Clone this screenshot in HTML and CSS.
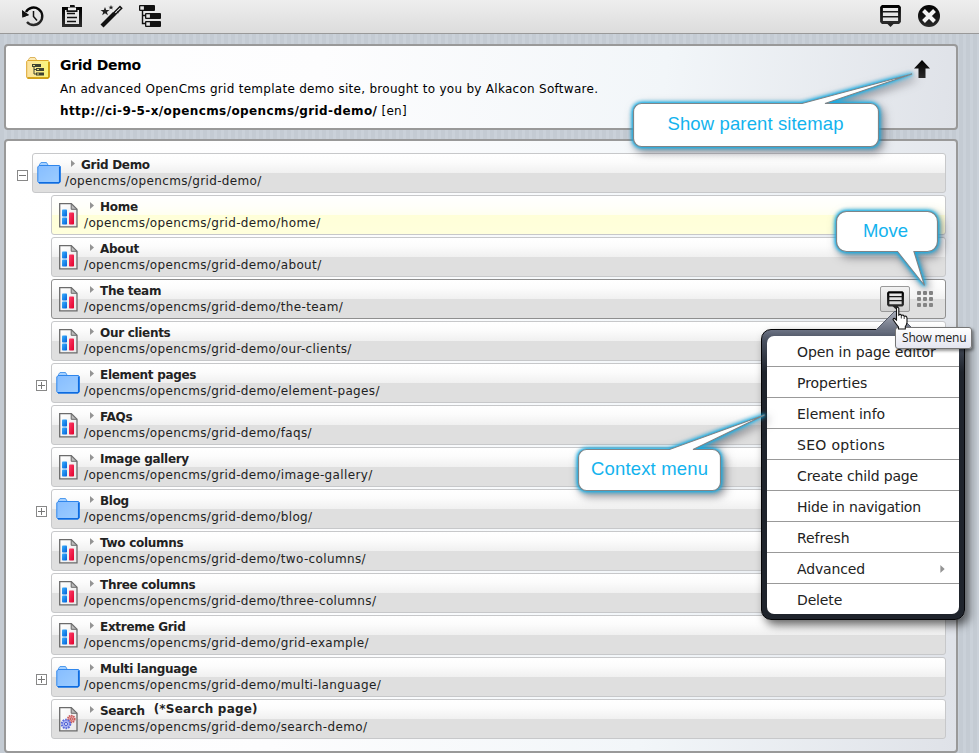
FILE: index.html
```html
<!DOCTYPE html>
<html lang="en">
<head>
<meta charset="utf-8">
<title>Grid Demo sitemap</title>
<link rel="stylesheet" href="styles.css">
</head>
<body>
<svg class="defs" width="0" height="0">
  <defs>
    <linearGradient id="ink" x1="0" y1="0" x2="0" y2="1"><stop offset="0" stop-color="#000"/><stop offset="1" stop-color="#2b2b2b"/></linearGradient>
    <linearGradient id="blueFolder" x1="0" y1="0" x2="1" y2="1"><stop offset="0" stop-color="#86bdff"/><stop offset="1" stop-color="#9dcdff"/></linearGradient>
    <linearGradient id="goldFolder" x1="0" y1="0" x2="1" y2="0"><stop offset="0" stop-color="#fbe1a0"/><stop offset="1" stop-color="#fbf678"/></linearGradient>
    <linearGradient id="sheet" x1="0" y1="0" x2="1" y2="1"><stop offset="0" stop-color="#fff"/><stop offset="1" stop-color="#e9e9e9"/></linearGradient>
    <linearGradient id="blueTile" x1="0" y1="0" x2="1" y2="1"><stop offset="0" stop-color="#3bb0ff"/><stop offset="1" stop-color="#0060d8"/></linearGradient>
    <linearGradient id="redTile" x1="0" y1="0" x2="1" y2="1"><stop offset="0" stop-color="#ff3c68"/><stop offset="1" stop-color="#e0002c"/></linearGradient>
    <linearGradient id="beak" x1="0" y1="0" x2="0" y2="1"><stop offset="0" stop-color="#a9adb9"/><stop offset="1" stop-color="#666d7d"/></linearGradient>
  </defs>
  <symbol id="folder" viewBox="0 0 24 24">
    <path d="M2.500 5V3.500L4 1.500h5.500L11 4v2H2.500z" fill="#a5d0ff" stroke="#4f9bee"/>
    <path d="M2 4.500h20.500l.8 1v15.300l-1.300 1.200H2L.8 20.500V6z" fill="url(#blueFolder)" stroke="#2f86ec"/>
    <path d="M22.700 5.500v15.500l-.9.700H2" fill="none" stroke="#0d6be0" stroke-width="1.500"/>
  </symbol>
  <symbol id="page" viewBox="0 0 19 25">
    <path d="M.7.7h11.600l5.700 5.500v17.600H.7z" fill="url(#sheet)" stroke="#6b6b6b" stroke-width="1.300"/>
    <path d="M12.200.8v5.500h5.700z" fill="#bbb" stroke="#6b6b6b"/>
    <rect x="3" y="6.500" width="5" height="7" rx=".8" fill="url(#blueTile)"/>
    <rect x="3" y="14.500" width="5" height="7" rx=".8" fill="url(#blueTile)"/>
    <rect x="10" y="9.500" width="5" height="12" rx=".8" fill="url(#redTile)"/>
  </symbol>
  <symbol id="gears" viewBox="0 0 19 25">
    <path d="M.7.7h11.600l5.700 5.500v17.600H.7z" fill="url(#sheet)" stroke="#6b6b6b" stroke-width="1.300"/>
    <path d="M12.200.8v5.500h5.700z" fill="#bbb" stroke="#6b6b6b"/>
    <circle cx="12.300" cy="12" r="3.400" fill="#e9a0a0" stroke="#c85a5a" stroke-width="1.800" stroke-dasharray="1.400 .8"/>
    <circle cx="12.300" cy="12" r="1.100" fill="#fff" stroke="#b84848"/>
    <circle cx="7" cy="17" r="4.300" fill="#a9b2f2" stroke="#5b6bdc" stroke-width="2" stroke-dasharray="1.700 1"/>
    <circle cx="7" cy="17" r="1.500" fill="#fff" stroke="#4456cc"/>
  </symbol>
  <symbol id="caret" viewBox="0 0 4 7"><path d="M0 0l4 3.500L0 7z" fill="#949494"/></symbol>
  <symbol id="bubble" viewBox="0 0 21 22">
    <path d="M2.500 1.500h16l1 1v14l-1 1h-16l-1-1v-14z" fill="none" stroke="url(#ink)" stroke-width="2.800"/>
    <path d="M2 6.700h17M2 11.700h17" stroke="#1a1a1a" stroke-width="1.500"/>
    <path d="M6.500 18h8l-4 4z" fill="#222"/>
  </symbol>
  <symbol id="tree" viewBox="0 0 23 23">
    <path d="M3.500 6v12.500H9M3.500 10.500H9" fill="none" stroke="#111" stroke-width="1.400"/>
    <rect x="0" y="0" width="16" height="6" rx="1" fill="#111"/><rect x="1.300" y="1.300" width="3.600" height="3.400" fill="#e8e8e8"/>
    <rect x="6" y="8" width="16" height="6" rx="1" fill="#111"/><rect x="7.300" y="9.300" width="3.600" height="3.400" fill="#e8e8e8"/>
    <rect x="6" y="16" width="16" height="6" rx="1" fill="#111"/><rect x="7.300" y="17.300" width="3.600" height="3.400" fill="#e8e8e8"/>
  </symbol>
</svg>

<header class="toolbar">
  <div class="tools tools-left">
    <svg width="22" height="22" viewBox="0 0 22 22"><path d="M4 7A8.700 8.700 0 1 1 5 17" fill="none" stroke="url(#ink)" stroke-width="2.400"/><path d="M0 5.500l.5 7 6.500-2.500z" fill="#111"/><path d="M0 5l7 5-6.500 2.500z" fill="#111"/><path d="M11.500 6v5.500l3.500 4" fill="none" stroke="#111" stroke-width="1.500"/></svg>
    <svg width="21" height="22" viewBox="0 0 21 22"><path d="M1.500 3.500h17v17h-17z" fill="none" stroke="url(#ink)" stroke-width="3"/><path d="M4.500 7V2.500L6 3h1.500L9 0h3l1.500 3H14l1.500-.5V7z" fill="#111"/><path d="M6 2.500h8v2.800H6z" fill="#eee"/><path d="M8 0h4.500v2H8z" fill="#111"/><path d="M5 8.500h8M5 12.500h10M5 16.500h9" stroke="#111" stroke-width="1.400"/></svg>
    <svg width="23" height="23" viewBox="0 0 23 23"><path d="M2 21L14.500 8.500" stroke="#111" stroke-width="4.200"/><path d="M14 7.500L20 1.500l1.700 1.700L15.700 9.200z" fill="#eee" stroke="#111" stroke-width="1.500"/><path d="M17 6.500l1.500 1.300" stroke="#111"/><path d="M5 2l1.200 3H9.500L6.900 7l1 3.200L5 8.300 2.200 10.200l1-3.200L.5 5h3.300zM11 0l.7 1.700h1.800l-1.400 1.100.5 1.700-1.600-1-1.600 1L9.900 2.800 8.500 1.700h1.800z" fill="#222"/></svg>
    <svg width="23" height="23"><use href="#tree"/></svg>
  </div>
  <div class="tools tools-right">
    <svg width="21" height="22"><use href="#bubble"/></svg>
    <svg width="22" height="22" viewBox="0 0 22 22"><circle cx="11" cy="11" r="11" fill="url(#ink)"/><path d="M5.500 5.500l11 11M16.500 5.500l-11 11" stroke="#f4f4f4" stroke-width="4"/></svg>
  </div>
</header>

<section class="panel info">
  <svg class="info-icon" width="24" height="22" viewBox="0 0 24 22"><path d="M2.500 5V2.500l1.500-2h5l1.500 2.500v2z" fill="#fdeab5" stroke="#dcb560"/><path d="M1.500 3.500h20.800l.7 1v15.500l-1 1.200H1.500L.7 20V4.500z" fill="url(#goldFolder)" stroke="#dda62b"/><path d="M23 5v15l-1 1H1.500" fill="none" stroke="#c99500" stroke-width="1.500"/><g fill="#3f4232"><rect x="6" y="7" width="9" height="3"/><rect x="10" y="11" width="8" height="3"/><rect x="10" y="15.500" width="8" height="3"/></g><path d="M8 9v8h3M8 12.500h3" fill="none" stroke="#3f4232"/><path d="M7 8h2v1H7zM11 12h2v1h-2zM11 16.500h2v1h-2z" fill="#e5db80"/></svg>
  <div class="info-text">
    <h1>Grid Demo</h1>
    <p class="desc">An advanced OpenCms grid template demo site, brought to you by Alkacon Software.</p>
    <p class="link"><b>http://ci-9-5-x/opencms/opencms/grid-demo/</b> <span>[en]</span></p>
  </div>
  <svg class="up" width="16" height="18" viewBox="0 0 16 18"><path d="M8 0l8 8.500h-4.500V18h-7V8.500H0z" fill="url(#ink)"/></svg>
</section>

<section class="panel tree">
  <div class="node root"><i class="toggle"></i><div class="row"><svg class="folder"><use href="#folder"/></svg><div class="label"><div class="title"><svg class="caret"><use href="#caret"/></svg><b>Grid Demo</b></div><div class="url">/opencms/opencms/grid-demo/</div></div></div></div>
  <div class="node"><div class="row home"><svg class="page"><use href="#page"/></svg><div class="label"><div class="title"><svg class="caret"><use href="#caret"/></svg><b>Home</b></div><div class="url">/opencms/opencms/grid-demo/home/</div></div></div></div>
  <div class="node"><div class="row"><svg class="page"><use href="#page"/></svg><div class="label"><div class="title"><svg class="caret"><use href="#caret"/></svg><b>About</b></div><div class="url">/opencms/opencms/grid-demo/about/</div></div></div></div>
  <div class="node"><div class="row active"><svg class="page"><use href="#page"/></svg><div class="label"><div class="title"><svg class="caret"><use href="#caret"/></svg><b>The team</b></div><div class="url">/opencms/opencms/grid-demo/the-team/</div></div>
    <div class="actions"><button class="menu-btn"><svg width="17" height="18"><use href="#bubble"/></svg></button><span class="grip"><i></i><i></i><i></i><i></i><i></i><i></i><i></i><i></i><i></i></span></div></div></div>
  <div class="node"><div class="row"><svg class="page"><use href="#page"/></svg><div class="label"><div class="title"><svg class="caret"><use href="#caret"/></svg><b>Our clients</b></div><div class="url">/opencms/opencms/grid-demo/our-clients/</div></div></div></div>
  <div class="node"><i class="toggle plus"></i><div class="row"><svg class="folder"><use href="#folder"/></svg><div class="label"><div class="title"><svg class="caret"><use href="#caret"/></svg><b>Element pages</b></div><div class="url">/opencms/opencms/grid-demo/element-pages/</div></div></div></div>
  <div class="node"><div class="row"><svg class="page"><use href="#page"/></svg><div class="label"><div class="title"><svg class="caret"><use href="#caret"/></svg><b>FAQs</b></div><div class="url">/opencms/opencms/grid-demo/faqs/</div></div></div></div>
  <div class="node"><div class="row"><svg class="page"><use href="#page"/></svg><div class="label"><div class="title"><svg class="caret"><use href="#caret"/></svg><b>Image gallery</b></div><div class="url">/opencms/opencms/grid-demo/image-gallery/</div></div></div></div>
  <div class="node"><i class="toggle plus"></i><div class="row"><svg class="folder"><use href="#folder"/></svg><div class="label"><div class="title"><svg class="caret"><use href="#caret"/></svg><b>Blog</b></div><div class="url">/opencms/opencms/grid-demo/blog/</div></div></div></div>
  <div class="node"><div class="row"><svg class="page"><use href="#page"/></svg><div class="label"><div class="title"><svg class="caret"><use href="#caret"/></svg><b>Two columns</b></div><div class="url">/opencms/opencms/grid-demo/two-columns/</div></div></div></div>
  <div class="node"><div class="row"><svg class="page"><use href="#page"/></svg><div class="label"><div class="title"><svg class="caret"><use href="#caret"/></svg><b>Three columns</b></div><div class="url">/opencms/opencms/grid-demo/three-columns/</div></div></div></div>
  <div class="node"><div class="row"><svg class="page"><use href="#page"/></svg><div class="label"><div class="title"><svg class="caret"><use href="#caret"/></svg><b>Extreme Grid</b></div><div class="url">/opencms/opencms/grid-demo/grid-example/</div></div></div></div>
  <div class="node"><i class="toggle plus"></i><div class="row"><svg class="folder"><use href="#folder"/></svg><div class="label"><div class="title"><svg class="caret"><use href="#caret"/></svg><b>Multi language</b></div><div class="url">/opencms/opencms/grid-demo/multi-language/</div></div></div></div>
  <div class="node"><div class="row"><svg class="page"><use href="#gears"/></svg><div class="label"><div class="title"><svg class="caret"><use href="#caret"/></svg><b>Search</b><b class="suffix">(*Search page)</b></div><div class="url">/opencms/opencms/grid-demo/search-demo/</div></div></div></div>
</section>

<nav class="menu">
  <svg class="menu-beak" width="38" height="20" viewBox="0 0 38 20"><path d="M0 19L19 0l19 19v1H0z" fill="url(#beak)"/><path d="M0 19L19 0l19 19" fill="none" stroke="#555b69"/></svg>
  <ul>
    <li>Open in page editor</li>
    <li>Properties</li>
    <li>Element info</li>
    <li>SEO options</li>
    <li>Create child page</li>
    <li>Hide in navigation</li>
    <li>Refresh</li>
    <li>Advanced<svg class="sub" width="5" height="8" viewBox="0 0 4 7"><use href="#caret"/></svg></li>
    <li>Delete</li>
  </ul>
</nav>

<svg class="callouts" width="979" height="753" viewBox="0 0 979 753">
  <g class="balloons">
    <path d="M642.500 103.500H802L912 74 825 103.500h45.500a8 8 0 0 1 8 8v27a8 8 0 0 1-8 8h-229a8 8 0 0 1-8-8v-27a8 8 0 0 1 8-8z"/>
    <path d="M846.500 211.500h81a10 10 0 0 1 10 10v20a10 10 0 0 1-10 10H914L924.500 285.500 897.500 251.500h-51a10 10 0 0 1-10-10v-20a10 10 0 0 1 10-10z"/>
    <path d="M586.500 449.500H669.500L764.500 415 693 449.500h19.500a8 8 0 0 1 8 8v25a8 8 0 0 1-8 8h-126a8 8 0 0 1-8-8v-25a8 8 0 0 1 8-8z"/>
  </g>
  <g class="balloon-text">
    <text x="667.500" y="130" textLength="176">Show parent sitemap</text>
    <text x="863" y="237" textLength="45">Move</text>
    <text x="591" y="475" textLength="117">Context menu</text>
  </g>
</svg>

<div class="tip">Show menu</div>
<svg class="pointer" width="17" height="24" viewBox="0 0 17 24"><path d="M4.500 14V2.200Q5.500.2 6.800 2.200V9Q8.500 7.500 9.500 9.500 11 8.300 12.200 10.300 14.500 9.500 15 12v4.500Q14.500 19 13.300 20.500V23H6.500V21Q4 18 1 13.500 1.500 11 4.500 14z" fill="#fff" stroke="#111" stroke-width="1.100"/><path d="M9.300 9.500v3M12.200 10.500V13" stroke="#111" stroke-width=".8"/></svg>
</body>
</html>
```
FILE: styles.css
```css
* { box-sizing: border-box; }
html { height: 753px; overflow: hidden; }
body {
  margin: 0;
  height: 753px;
  position: relative;
  overflow: hidden;
  font-family: Verdana, "DejaVu Sans", sans-serif;
  font-size: 12px;
  color: #222;
  background: repeating-linear-gradient(90deg, #c4cbd3 0, #c4cbd3 4px, #cad1d9 4px, #cad1d9 7px);
}
svg { display: block; flex: none; }
.defs { position: absolute; }

.toolbar {
  height: 34px;
  display: flex;
  justify-content: space-between;
  padding: 5px 39px 0 22px;
  border-bottom: 1px solid #999;
  background: linear-gradient(#eeeeee, #dcdcdc);
}
.tools { display: flex; }
.tools-left { gap: 17px; }
.tools-left svg:nth-child(2) { margin-left: 1px; }
.tools-left svg:nth-child(4) { margin-left: -1px; }
.tools-right { gap: 17px; }

.panel {
  width: 954px;
  margin-left: 4px;
  border: 2px solid #999;
  border-radius: 4px;
  background: linear-gradient(97deg, #fff 0%, #fdfdfe 33%, #f2f6f9 69%, #dfe2e8 100%);
}
.info { height: 86px; margin-top: 10px; display: flex; color: #000; }
.info-icon { margin: 11px 0 0 20px; }
.info-text { margin-left: 10px; flex: 1; padding-top: 9px; }
.info h1 { margin: 0; font-size: 14px; line-height: 20px; letter-spacing: -.28px; }
.info p { margin: 0; white-space: nowrap; }
.desc { line-height: 28px; letter-spacing: .283px; }
.link { line-height: 16px; letter-spacing: .3px; }
.link b { letter-spacing: .4px; }
.up { margin: 14px 26px 0 0; }

.tree { height: 614px; margin-top: 9px; padding: 12px 10px 0 45px; }
.node { position: relative; height: 42px; }
.root { margin-left: -19px; }
.row {
  height: 40px;
  display: flex;
  border: 1px solid #c7c8ca;
  border-radius: 3px;
  background: linear-gradient(#fff 0, #fcfcfc 8px, #f0f0f0 19px, #dfdfdf 19px, #dfdfdf 100%);
}
.home { background: linear-gradient(#fff 0, #fffffa 10px, #fffff0 19px, #ffffd8 19px, #ffffdc 100%); }
.active { border-color: #8f8f8f; }
.toggle {
  position: absolute;
  left: -15px;
  top: 17px;
  width: 11px;
  height: 11px;
  border: 1px solid #888;
  background: linear-gradient(#777, #777) center / 7px 1px no-repeat #fff;
}
.plus { background: linear-gradient(#777, #777) center / 7px 1px no-repeat, linear-gradient(#777, #777) center / 1px 7px no-repeat, #fff; }
.folder { width: 24px; height: 24px; margin: 7px 3px 0 4px; }
.page { width: 19px; height: 25px; margin: 7px 5px 0 7px; }
.label { padding: 2px 0 0 1px; flex: 1; white-space: nowrap; }
.title { display: flex; height: 16px; line-height: 19px; }
.caret { width: 4px; height: 7px; margin: 4px 6px 0 6px; }
.title b { letter-spacing: -.3px; }
.title .suffix { margin: -2px 0 0 9px; letter-spacing: .2px; }
.url { line-height: 19px; letter-spacing: .36px; }

.actions { display: flex; padding: 6px 12px 0 0; gap: 7px; }
.menu-btn {
  width: 30px;
  height: 26px;
  padding: 3px 0 0 6px;
  border: 1px solid #999;
  border-radius: 2px;
  background: linear-gradient(#f2f2f2, #d0d0d0);
}
.menu-btn svg { margin-top: -2px; }
.grip { display: grid; grid-template-columns: repeat(3, 4px); grid-auto-rows: 4px; gap: 2px; padding-top: 5px; }
.grip i { background: #858585; border-radius: 1px; }

.menu {
  position: absolute;
  left: 761px;
  top: 329px;
  width: 204px;
  height: 291px;
  padding: 6px 5px 5px;
  border: 1px solid #050507;
  border-radius: 10px;
  background: linear-gradient(#6c7384 0, #4a5160 10px, #1f242c 42px);
  box-shadow: 4px 5px 10px rgba(0, 0, 0, .6);
}
.menu-beak { position: absolute; left: 114px; top: -19px; }
.menu ul { margin: 0; padding: 0; list-style: none; background: #fff; border-radius: 7px; overflow: hidden; }
.menu li {
  display: flex;
  height: 31px;
  padding: 0 14px 0 30px;
  line-height: 32px;
  font-size: 14px;
  letter-spacing: -.05px;
  border-bottom: 1px solid #999;
}
.menu li:nth-child(6) { letter-spacing: -.2px; }
.menu li:nth-child(5), .menu li:nth-child(8), .menu li:nth-child(9) { letter-spacing: -.15px; }
.menu li:nth-child(4) { letter-spacing: .3px; }
.menu li:last-child { height: 30px; border: 0; }
.sub { margin: 12px 0 0 auto; }

.callouts { position: absolute; left: 0; top: 0; }
.balloons path {
  fill: #fff;
  stroke: #7d8589;
  stroke-width: 1.2;
  filter: drop-shadow(0 0 2px #12aee8) drop-shadow(0 0 1px #12aee8) drop-shadow(3px 4px 4px rgba(40, 40, 50, .5));
}
.balloon-text { font: 18.500px Arial, "Liberation Sans", sans-serif; fill: #13b3ee; }

.tip {
  position: absolute;
  left: 895px;
  top: 327px;
  width: 77px;
  height: 22px;
  padding-left: 6px;
  border: 1px solid #767676;
  border-radius: 3px;
  background: linear-gradient(#fff, #e4e5f0);
  box-shadow: 2px 2px 3px rgba(0, 0, 0, .4);
  font: 12px/20px "Open Sans", sans-serif;
  letter-spacing: -.2px;
  color: #222;
}
.pointer { position: absolute; left: 892px; top: 306px; }
```
